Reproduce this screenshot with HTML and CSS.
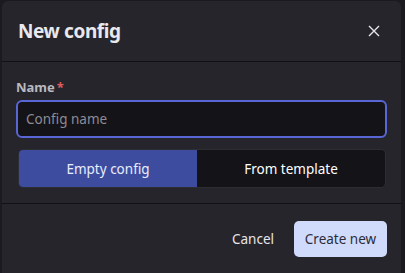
FILE: index.html
```html
<!DOCTYPE html>
<html lang="en">
<head>
  <meta charset="UTF-8">
  <title>New config</title>
  <link rel="stylesheet" href="styles.css">
</head>
<body>
  <div class="dialog">
    <div class="dialog-header">
      <h2>New config</h2>
      <button class="close-btn" aria-label="Close">
        <svg width="12" height="12" viewBox="0 0 12 12"><path d="M1 1L11 11M11 1L1 11" stroke="#e6e6ea" stroke-width="1.4" fill="none"/></svg>
      </button>
    </div>
    <div class="dialog-body">
      <label class="field-label" for="configName">Name<span class="req">*</span></label>
      <input type="text" id="configName" placeholder="Config name">
      <div class="segmented">
        <div class="seg active">Empty config</div>
        <div class="seg">From template</div>
      </div>
    </div>
    <div class="dialog-footer">
      <button class="btn-cancel">Cancel</button>
      <button class="btn-primary">Create new</button>
    </div>
  </div>
</body>
</html>
```

FILE: styles.css
```css
body {
  margin: 0;
  background-color: #1b1a1f;
  font-family: 'Noto Sans', 'Open Sans', sans-serif;
  color: #e6e6ea;
}
.dialog {
  margin: 1px 4px 0 2px;
  height: 272px;
  background-color: #26252b;
  border-radius: 6px 6px 0 0;
  display: flex;
  flex-direction: column;
}
.dialog-header {
  height: 60px;
  display: flex;
  align-items: center;
  justify-content: space-between;
  padding: 0 20px 0 16px;
  border-bottom: 1px solid #111014;
}
.dialog-header h2 {
  margin: 0;
  font-size: 19px;
  letter-spacing: -0.4px;
  font-weight: 700;
  color: #e8e8ee;
}
.close-btn {
  background: none;
  border: none;
  padding: 0;
  width: 14px;
  height: 14px;
  display: flex;
  align-items: center;
  justify-content: center;
  cursor: pointer;
}
.dialog-body {
  height: 142px;
  padding: 16px 14px 0 14px;
  box-sizing: border-box;
  border-bottom: 1px solid #111014;
}
.field-label {
  display: block;
  font-size: 13px;
  font-weight: 700;
  color: #b9b9c2;
  line-height: 18px;
  margin-bottom: 4px;
}
.req {
  color: #e05a5a;
  margin-left: 2px;
}
#configName {
  display: block;
  width: 100%;
  box-sizing: border-box;
  height: 38px;
  background-color: #141318;
  border: 2px solid #5866d6;
  border-radius: 6px;
  padding: 0 8px;
  font-family: inherit;
  font-size: 13.5px;
  color: #e6e6ea;
  outline: none;
}
#configName::placeholder {
  color: #8c8c94;
}
.segmented {
  display: flex;
  margin: 11px 1px 0 2px;
  height: 37px;
  border: 1px solid #2e2d34;
  border-radius: 5px;
  overflow: hidden;
  background-color: #141318;
}
.seg {
  flex: 1;
  display: flex;
  align-items: center;
  justify-content: center;
  font-size: 13.5px;
  color: #ffffff;
}
.seg.active {
  flex: 0 0 178px;
  background-color: #3d4c9e;
  color: #e8ecff;
}
.dialog-footer {
  flex: 1;
  display: flex;
  justify-content: flex-end;
  align-items: flex-start;
  padding: 17px 14px 0 0;
  gap: 10px;
}
.btn-cancel {
  background: none;
  border: none;
  color: #e6e6ea;
  font-family: inherit;
  font-size: 13.5px;
  height: 36px;
  padding: 0 10px;
  cursor: pointer;
}
.btn-primary {
  background-color: #d0dbfb;
  color: #2b2c38;
  border: none;
  border-radius: 5px;
  font-family: inherit;
  font-size: 13.5px;
  height: 36px;
  width: 93px;
  padding: 0;
  cursor: pointer;
}
```
